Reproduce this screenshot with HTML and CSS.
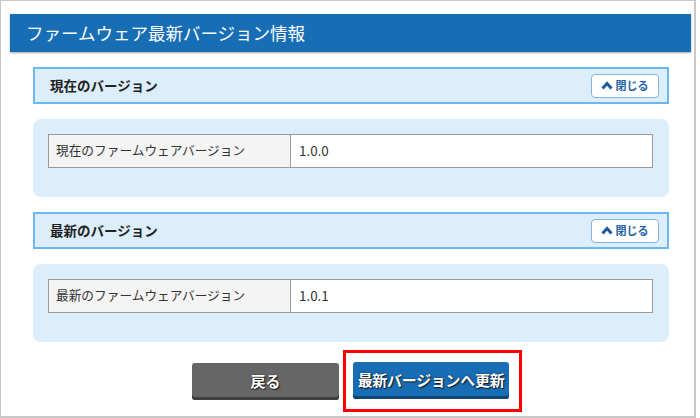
FILE: index.html
```html
<!DOCTYPE html>
<html lang="ja">
<head>
<meta charset="utf-8">
<title>ファームウェア最新バージョン情報</title>
<link rel="stylesheet" href="styles.css">
</head>
<body>
<div class="frame">
  <h1 class="title">ファームウェア最新バージョン情報</h1>

  <div class="section">
    <div class="sec-head">
      <span class="sec-title">現在のバージョン</span>
      <button class="close-btn" type="button">
        <svg class="chev" width="12" height="9" viewBox="0 0 12 9"><polyline points="1.5,7.5 6,2.5 10.5,7.5" fill="none" stroke="#1d5c99" stroke-width="3" stroke-linejoin="miter"/></svg>
        <span>閉じる</span>
      </button>
    </div>
    <div class="sec-body">
      <table class="info">
        <tr><th>現在のファームウェアバージョン</th><td>1.0.0</td></tr>
      </table>
    </div>
  </div>

  <div class="section section-last">
    <div class="sec-head">
      <span class="sec-title">最新のバージョン</span>
      <button class="close-btn" type="button">
        <svg class="chev" width="12" height="9" viewBox="0 0 12 9"><polyline points="1.5,7.5 6,2.5 10.5,7.5" fill="none" stroke="#1d5c99" stroke-width="3" stroke-linejoin="miter"/></svg>
        <span>閉じる</span>
      </button>
    </div>
    <div class="sec-body">
      <table class="info">
        <tr><th>最新のファームウェアバージョン</th><td>1.0.1</td></tr>
      </table>
    </div>
  </div>

  <div class="actions">
    <button class="btn btn-gray" type="button">戻る</button>
    <div class="highlight">
      <button class="btn btn-blue" type="button">最新バージョンへ更新</button>
    </div>
  </div>
</div>
</body>
</html>
```

FILE: styles.css
```css
* { box-sizing: border-box; }
html, body { margin: 0; padding: 0; background: #fff; }
body {
  font-family: "Noto Sans CJK JP", "Noto Sans", sans-serif;
  color: #333;
}
.frame {
  width: 696px;
  height: 418px;
  border: 1px solid #c8c8c8;
  border-width: 1px 2px 2px 1px;
  padding-top: 13px;
}
.title {
  margin: 0 3px 15px 9px;
  height: 38px;
  background: #176eb4;
  color: #fff;
  font-size: 17.5px;
  font-weight: 400;
  line-height: 38px;
  padding-left: 16px;
  box-shadow: 0 1px 2px rgba(0,0,0,0.35);
  white-space: nowrap;
}
.section {
  margin: 0 0 15px 32px;
  width: 636px;
}
.section-last { margin-bottom: 0; }
.sec-head {
  height: 37px;
  border: 2px solid #6db7f1;
  background: #dcedfc;
  display: flex;
  align-items: center;
  justify-content: space-between;
  padding: 0 8px 0 15px;
}
.sec-title {
  font-size: 13.5px;
  font-weight: 700;
  color: #222;
  line-height: 1;
}
.close-btn {
  width: 68px;
  height: 24px;
  border: 1.5px solid #86b3dc;
  border-radius: 4px;
  background: #fff;
  display: flex;
  align-items: center;
  justify-content: center;
  gap: 3px;
  padding: 0 1px 0 0;
  font-family: inherit;
  font-size: 11px;
  font-weight: 700;
  color: #1d62a6;
  line-height: 1;
}
.close-btn .chev { display: block; }
.sec-body {
  margin-top: 15px;
  height: 78px;
  background: #dcedfb;
  border-radius: 8px;
  padding: 15px 16px 0 15px;
}
.info {
  width: 605px;
  height: 33px;
  border-collapse: collapse;
  font-size: 12.7px;
}
.info th, .info td {
  height: 33px;
  border: 1px solid #9a9a9a;
  padding: 0 0 1px 7px;
  text-align: left;
  font-weight: 400;
  color: #333;
  line-height: 1;
}
.info th {
  width: 242px;
  background: #f4f4f4;
}
.info td {
  background: #fff;
  padding-left: 8px;
  font-size: 13.4px;
}
.actions {
  display: flex;
  align-items: center;
  margin: 8px 0 0 191px;
}
.btn {
  height: 37px;
  border: 0;
  border-radius: 3px;
  font-family: inherit;
  font-size: 15px;
  font-weight: 700;
  color: #fff;
  text-shadow: 1px 1px 1px rgba(0,0,0,0.75), 0 0 2px rgba(0,0,0,0.5);
  padding: 0 0 2px 0;
}
.btn-gray {
  width: 147px;
  background: #666;
  box-shadow: inset 0 -3px 0 #3f3f3f;
}
.highlight {
  margin-left: 4px;
  border: 3px solid #f00;
  padding: 9px 10px 10px 7px;
}
.btn-blue {
  width: 156px;
  background: #186db4;
  box-shadow: inset 0 -3px 0 #0f4474;
  letter-spacing: -0.3px;
}
```
